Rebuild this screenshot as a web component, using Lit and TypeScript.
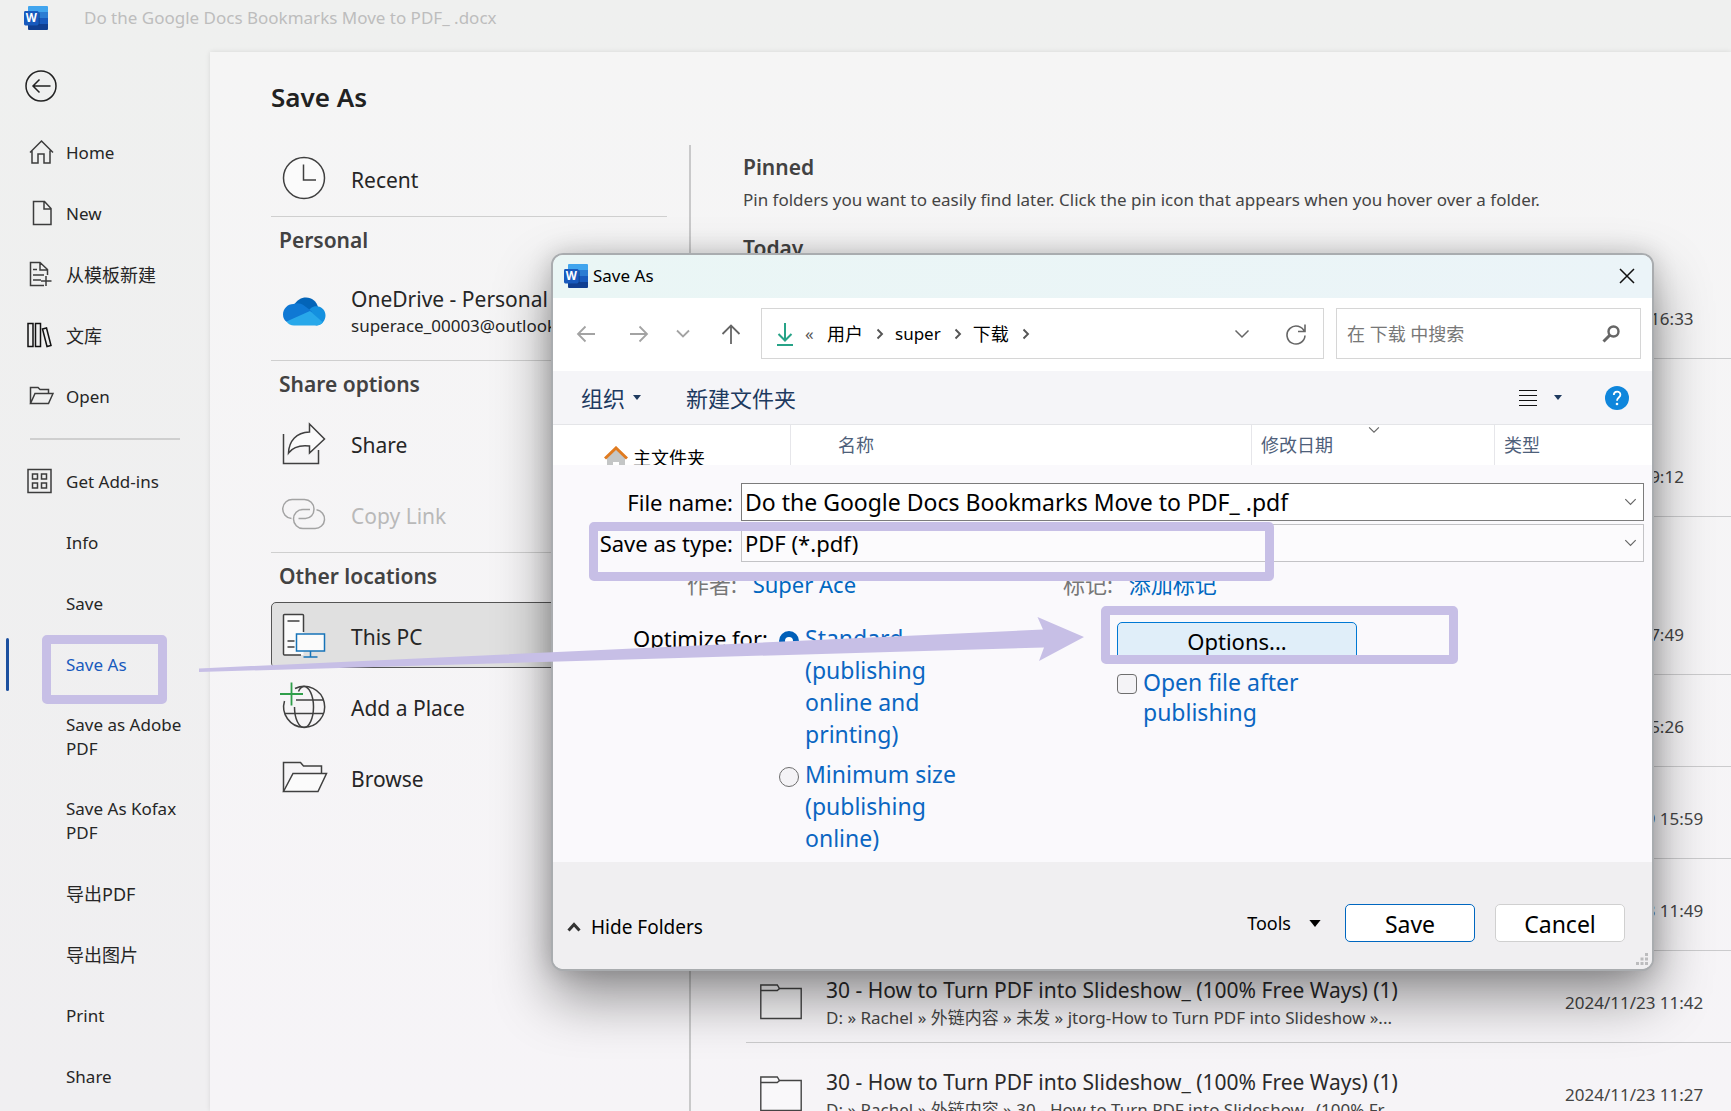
import { LitElement, html, css, type TemplateResult } from "lit";
import { customElement } from "lit/decorators.js";
import { classMap } from "lit/directives/class-map.js";

const wordLogo = html`<svg class="logo" viewBox="0 0 24 24" aria-hidden="true">
  <path d="M5 0h18a1 1 0 0 1 1 1v5H4V1a1 1 0 0 1 1-1z" fill="#41a5ee" />
  <path d="M4 6h20v6H4z" fill="#2b7cd3" />
  <path d="M4 12h20v6H4z" fill="#185abd" />
  <path d="M4 18h20v5a1 1 0 0 1-1 1H5a1 1 0 0 1-1-1z" fill="#103f91" />
  <path d="M4 6h10a2 2 0 0 1 2 2v10a2 2 0 0 1-2 2H4z" fill="#0b3a80" opacity=".5" />
  <rect x="0" y="5" width="14.500" height="14.500" rx="1.400" fill="#185abd" />
  <text x="7.200" y="16.400" text-anchor="middle" font-size="11.500" font-weight="700" fill="#fff">W</text>
</svg>`;

const chevron = (cls = "") => html`<svg class="chev ${cls}" viewBox="0 0 16 10" aria-hidden="true">
  <path d="M1.500 1.500 8 8l6.500-6.500" fill="none" stroke="currentColor" stroke-width="1.500" />
</svg>`;

const crumbSep = html`<svg class="sep" viewBox="0 0 8 12" aria-hidden="true">
  <path d="M1.500 1.500 6 6l-4.500 4.500" fill="none" stroke="#555" stroke-width="1.900" />
</svg>`;

const caret = html`<svg class="caret" viewBox="0 0 8 5" aria-hidden="true"><path d="M0 0h8L4 5z" fill="currentColor" /></svg>`;

const folder = html`<svg class="folder" viewBox="0 0 42 36" aria-hidden="true">
  <path d="M.800 34.500V1h16.500l2.200 3.500h21.700v30z" fill="rgba(255,255,255,.35)" stroke="#444" stroke-width="1.400" />
  <path d="M.800 6.500h16.500l2.200-2" fill="none" stroke="#444" stroke-width="1.400" />
</svg>`;

const navIcons: Record<string, TemplateResult> = {
  home: html`<svg class="nav-icon" viewBox="0 0 28 28"><path d="M6 11.500v12.500h6V15h6v9h6V11.500M4 13.500 15.500 2 27 13.500" /></svg>`,
  blank: html`<svg class="nav-icon" viewBox="0 0 28 28"><path d="M7.500 1.500h11l6.500 7v16H7.500zM18 1.500V9h7" /></svg>`,
  template: html`<svg class="nav-icon" viewBox="0 0 28 28"><path d="M18 24.500H4.500v-23H14l7.500 7V14M14 1.500V9h7.500M7 8.500h4M7 14h11M7 19h8M20 15v10M15 20h10.500" /></svg>`,
  library: html`<svg class="nav-icon strong" viewBox="0 0 28 28"><path d="M2 1.500h5v23H2zM9.500 1.500h5v23h-5zM16.500 7l4-1 4.500 17.500-4 1z" /></svg>`,
  open: html`<svg class="nav-icon" viewBox="0 0 28 28"><path d="M4.500 20.500V4.500h7.500l2 2h8.500v4M4.500 20.500l4.500-10h18l-4.500 10z" /></svg>`,
  addins: html`<svg class="nav-icon" viewBox="0 0 28 28"><path d="M2 1.500h23v23H2zM6.500 6h5v5h-5zM15.500 6h5v5h-5zM6.500 15h5v5h-5zM15.500 15h5v5h-5z" /></svg>`,
};

const placeIcons: Record<string, TemplateResult> = {
  clock: html`<svg class="place-icon" viewBox="0 0 44 46"><circle cx="22" cy="23" r="20.500" fill="#fbfbfb" /><path d="M21.500 9.500V25H34" /></svg>`,
  cloud: html`<svg class="place-icon" viewBox="0 0 44 46">
    <g stroke="none">
      <path d="M12 17C15 12 19 9.500 24 9.500c6 0 10.500 4 12 9.500l-12 7z" fill="#0364b8" />
      <path d="M36 18.500c4.500.500 7.500 4.500 7.500 9S40 37.500 34 37.500L22 27l7-7c2-1.500 4.500-2 7-1.500z" fill="#1490df" />
      <path d="M11.500 16c4-1.500 7.500-.500 10.500 1.500l8 6-25 10.500C2.500 32.500 1 30 1 26.500c0-5.500 4.500-10.500 10.500-10.500z" fill="#0f78d4" />
      <path d="M4.500 33.500 28 23l13 11.500c-1.500 2-4 3-7 3H12c-3 0-6-1.500-7.500-4z" fill="#28a8ea" />
    </g></svg>`,
  share: html`<svg class="place-icon" viewBox="0 0 44 46"><path d="M1.500 14v29.500h35V30" /><path fill="#fbfbfb" d="M27.500 4l15 15-15 14v-7C19 25 11 27 6.500 33 7 21 14 12.500 27.500 12z" /></svg>`,
  link: html`<svg class="place-icon" viewBox="0 0 44 46"><path d="M9.500 27.500A9.500 9.500 0 0 1 11 8.500h11.500A9.500 9.500 0 0 1 32 18c0 5.500-3.500 9.500-8.500 9.500h-7" /><path d="M34.500 18.800A9.400 9.400 0 0 1 33 37.500H21A9.500 9.500 0 0 1 11.500 28c0-5.500 4-9.500 9.500-9.500h7" /></svg>`,
  pc: html`<svg class="place-icon" viewBox="0 0 44 46">
    <path fill="#fbfbfb" stroke="none" d="M1.500 2.500h20V43h-20z" /><path d="M19 43H2.500a1 1 0 0 1-1-1V3.500a1 1 0 0 1 1-1h18a1 1 0 0 1 1 1V20M5.500 9h12M5.500 29h7M5.500 35h7" />
    <rect x="14.500" y="22" width="28" height="17" fill="#fbfbfb" stroke="#1673b8" /><path d="M28.500 39v6M21.500 45h14" stroke="#1673b8" /></svg>`,
  globe: html`<svg class="place-icon" viewBox="0 0 44 46">
    <path d="M13 5.500A20.500 20.500 0 1 1 2.500 18M13 5.500A20.500 20.500 0 0 1 22 3.500" /><path d="M16.500 8.500C18 5 20 3.500 22 3.500c5 0 9.500 9 9.500 20.500S27 44.500 22 44.500 12.500 36 12.500 24M14 17h27.500M3 30.500h38.500" />
    <path d="M9.500-.500v23M-2 11h23" stroke="#2f9e4a" stroke-width="1.800" /></svg>`,
  browse: html`<svg class="place-icon" viewBox="0 0 44 46"><path d="M1.500 37.500v-29h17l3 3.500h18v7.500" /><path fill="#fbfbfb" d="M1.500 37.500l9.500-18h33.500L36 37.500z" /></svg>`,
};

interface NavItem { label: string; icon?: string; current?: boolean }

const mainNav: NavItem[] = [
  { label: "Home", icon: "home" },
  { label: "New", icon: "blank" },
  { label: "从模板新建", icon: "template" },
  { label: "文库", icon: "library" },
  { label: "Open", icon: "open" },
];

const fileNav: NavItem[] = [
  { label: "Get Add-ins", icon: "addins" },
  { label: "Info" },
  { label: "Save" },
  { label: "Save As", current: true },
  { label: "Save as Adobe PDF" },
  { label: "Save As Kofax PDF" },
  { label: "导出PDF" },
  { label: "导出图片" },
  { label: "Print" },
  { label: "Share" },
];

interface Recent { date: string; name?: string; path?: string }

const title30 = "30 - How to Turn PDF into Slideshow_ (100% Free Ways) (1)";
const groups: Recent[][] = [
  [{ date: "2024/12/5 16:33" }],
  [{ date: "2024/12/4 9:12" }],
  [
    { date: "2024/12/2 7:49" },
    { date: "2024/12/2 5:26" },
    { date: "2024/11/29 15:59" },
    { date: "2024/11/23 11:49" },
    { date: "2024/11/23 11:42", name: title30, path: "D: » Rachel » 外链内容 » 未发 » jtorg-How to Turn PDF into Slideshow »..." },
    { date: "2024/11/23 11:27", name: title30, path: "D: » Rachel » 外链内容 » 30 - How to Turn PDF into Slideshow_ (100% Fr..." },
  ],
];

const base = css`
  * { box-sizing: border-box; }
  button, input, select { font: inherit; color: inherit; background: none; border: 0; padding: 0; margin: 0; text-align: left; }
  h1, h2, p { margin: 0; }
  svg { flex: none; display: block; }
  .logo { width: 24px; height: 24px; }
  .cjk { font-size: 18px; }
`;

@customElement("side-nav")
export class SideNav extends LitElement {
  static styles = [base, css`
    :host { display: block; padding-top: 18px; font-size: 17px; line-height: 24px; color: #262626; }
    .back { display: block; margin: 0 0 20px 25px; width: 32px; height: 32px; }
    .back svg { width: 32px; height: 32px; fill: none; stroke: #222; stroke-width: 1.500; }
    .item { position: relative; display: flex; align-items: center; gap: 12px; width: 100%; min-height: 61px; padding: 16px 16px 16px 26px; }
    .label { padding: 2px 0; }
    .slot { width: 28px; flex: none; }
    .nav-icon { width: 28px; height: 28px; fill: none; stroke: #3c3c3c; stroke-width: 1.500; }
    .strong { stroke: #111; }
    .current { color: #185abd; }
    .current::before { content: ""; position: absolute; left: 6px; top: 4px; bottom: 4px; width: 3px; border-radius: 2px; background: #1b4f9f; }
    .rule { height: 2px; margin: 11px 30px; background: #cfcfcf; }
  `];

  private item(n: NavItem) {
    const cjk = /[\u4e00-\u9fff]/.test(n.label);
    return html`<button class=${classMap({ item: true, current: !!n.current, cjk })}>
      <span class="slot">${n.icon ? navIcons[n.icon] : ""}</span><span class="label">${n.label}</span>
    </button>`;
  }

  render() {
    return html`
      <button class="back" aria-label="Back"><svg viewBox="0 0 32 32"><circle cx="16" cy="16" r="15" /><path d="M25.500 16H8M14.500 9.500 8 16l6.500 6.500" /></svg></button>
      <nav>
        ${mainNav.map((n) => this.item(n))}
        <div class="rule"></div>
        ${fileNav.map((n) => this.item(n))}
      </nav>`;
  }
}

@customElement("place-list")
export class PlaceList extends LitElement {
  static styles = [base, css`
    :host { display: block; width: 396px; color: #262626; }
    .place { display: flex; align-items: center; gap: 25px; width: 100%; height: 66px; margin-bottom: 5px; padding-left: 10px; border: 1px solid transparent; border-radius: 5px; font-size: 21px; line-height: 28px; white-space: nowrap; }
    .label { padding-top: 3px; }
    .place-icon { width: 44px; height: 46px; overflow: visible; fill: none; stroke: #404040; stroke-width: 1.500; }
    .account { height: 89px; }
    .mail { display: block; font-size: 17px; line-height: 26px; }
    .off { color: #b9b9b9; }
    .off .place-icon { stroke: #a3a3a3; }
    .selected { background: #e0e0e0; border-color: #555; }
    .group { border-top: 1px solid #cfcfcf; padding: 9px 0 12px 8px; font-size: 21px; line-height: 28px; font-weight: 600; color: #424242; height: 50px; }
  `];

  private place(icon: string, label: string, cls = "") {
    return html`<button class="place ${cls}" ?disabled=${cls === "off"}>${placeIcons[icon]}<span class="label">${label}</span></button>`;
  }

  render() {
    return html`
      ${this.place("clock", "Recent")}
      <h2 class="group">Personal</h2>
      <button class="place account">${placeIcons.cloud}<span class="label">OneDrive - Personal<span class="mail">superace_00003@outlook.com</span></span></button>
      <h2 class="group">Share options</h2>
      ${this.place("share", "Share")} ${this.place("link", "Copy Link", "off")}
      <h2 class="group">Other locations</h2>
      ${this.place("pc", "This PC", "selected")} ${this.place("globe", "Add a Place")} ${this.place("browse", "Browse")}
    `;
  }
}

@customElement("recent-folders")
export class RecentFolders extends LitElement {
  static styles = [base, css`
    :host { display: block; padding: 8px 0 0 52px; color: #444; font-size: 17px; line-height: 24px; }
    h2 { font-size: 21px; line-height: 28px; font-weight: 600; color: #424242; }
    .hint { margin: 7px 0 22px; white-space: nowrap; }
    .rows { list-style: none; margin: 5px 0 66px 3px; padding: 0; }
    .row { display: flex; align-items: center; height: 92px; padding: 10px 0 0 14px; border-bottom: 1px solid #cbcbcd; }
    .folder { width: 42px; height: 36px; margin-right: 24px; }
    .text { flex: 1; min-width: 0; padding-top: 5px; line-height: 27px; white-space: nowrap; }
    .name { font-size: 21px; color: #2a2a2a; }
    .date { width: 166px; flex: none; padding-top: 2px; }
  `];

  render() {
    return html`
      <h2>Pinned</h2>
      <p class="hint">Pin folders you want to easily find later. Click the pin icon that appears when you hover over a folder.</p>
      <h2>Today</h2>
      ${groups.map((g) => html`<ul class="rows">
        ${g.map((r) => html`<li class="row">
          ${r.name ? folder : ""}
          <div class="text">${r.name ? html`<div class="name">${r.name}</div><div>${r.path}</div>` : ""}</div>
          <time class="date">${r.date}</time>
        </li>`)}
      </ul>`)}`;
  }
}

@customElement("save-dialog")
export class SaveDialog extends LitElement {
  static styles = [base, css`
    :host { display: block; border: 2px solid #a9acaf; border-radius: 12px; overflow: hidden; background: #faf9fc; color: #000; font-size: 17px; line-height: 24px; box-shadow: 0 26px 56px rgba(0, 0, 0, .42), 0 0 24px rgba(0, 0, 0, .16); }
    .title { display: flex; align-items: center; gap: 5px; height: 43px; padding: 0 17px 2px 11px; background: linear-gradient(90deg, #eaf6f5, #ebf4f8); }
    .close { margin-left: auto; }
    .close svg { width: 16px; height: 16px; }
    .address { display: flex; gap: 12px; padding: 10px 11px 12px 23px; background: #fff; }
    .moves { display: flex; align-items: center; width: 173px; }
    .moves svg { width: 20px; height: 20px; fill: none; stroke: #a3a3a3; stroke-width: 1.800; }
    .moves button { flex: none; }
    .moves .back { width: 53px; }
    .moves .forward { width: 47px; }
    .moves .slim { width: 45px; }
    .moves .slim svg { width: 14px; }
    .moves .up svg { stroke: #666; height: 22px; }
    .moves .up { width: 20px; }
    .box { display: flex; align-items: center; height: 51px; border: 1px solid #d6d6d6; }
    .crumbs { flex: 1; padding: 0 17px 0 14px; }
    .down { width: 18px; height: 24px; margin-right: 11px; }
    .more-crumbs { width: 22px; color: #555; }
    .sep { width: 8px; height: 12px; margin: 0 11px 0 13px; }
    .chev { width: 16px; height: 10px; color: #666; }
    .history { margin-left: auto; }
    .refresh { margin-left: 36px; }
    .refresh svg { width: 20px; height: 22px; }
    .search { width: 305px; padding: 0 20px 0 10px; }
    .search input { flex: 1; min-width: 0; outline: 0; font-size: 18px; }
    .search input::placeholder { color: #777; opacity: 1; }
    .search svg { width: 18px; height: 18px; }
    .tools { display: flex; align-items: center; height: 54px; padding: 0 23px 0 28px; background: #f5f5f8; border-bottom: 1px solid #e4e5e8; color: #1e3a5f; font-size: 22px; }
    .organize { display: flex; align-items: center; gap: 8px; margin-right: 45px; }
    .caret { width: 8px; height: 5px; }
    .view { display: flex; align-items: center; gap: 16px; margin-left: auto; }
    .view .lines { width: 20px; height: 18px; }
    .help { margin-left: 43px; }
    .help svg { width: 24px; height: 24px; }
    .files { display: flex; height: 40px; overflow: hidden; background: #fff; font-size: 18px; }
    .tree { display: flex; align-items: flex-start; gap: 5px; width: 237px; padding: 21px 0 0 51px; }
    .tree svg { width: 24px; height: 24px; }
    .columns { flex: 1; border-collapse: collapse; table-layout: fixed; }
    .columns th { position: relative; padding: 0 0 0 9px; border-left: 1px solid #e6e6ea; font-weight: 400; color: #4e607a; text-align: left; }
    .columns .c-name { width: 461px; padding-left: 47px; }
    .columns .c-date { width: 243px; }
    .sorted { position: absolute; left: 116px; top: 1px; width: 12px; height: 8px; }
    .panel { padding: 18px 8px 8px 0; font-size: 23px; line-height: 32px; }
    .fields { display: grid; grid-template-columns: 180px 1fr; gap: 3px 8px; align-items: center; }
    .fields label { justify-self: end; white-space: nowrap; font-size: 22px; }
    .field { display: flex; align-items: center; height: 38px; padding-right: 6px; border: 1px solid #7c7c7c; background: #fff; }
    .type { border-color: #c3c3c6; background: #fcfbfd; font-size: 22px; }
    .field input, .field select { flex: 1; min-width: 0; height: 34px; padding-left: 3px; outline: 0; appearance: none; }
    .field .chev { width: 13px; height: 8px; }
    .meta { display: grid; grid-template-columns: 376px 1fr; height: 60px; padding-left: 134px; font-size: 22px; line-height: 44px; color: #777; }
    .meta button { margin-left: 10px; color: #0067c0; line-height: 44px; vertical-align: top; }
    .options { display: grid; grid-template-columns: 146px 338px 1fr; align-items: start; padding-left: 80px; }
    .optimize { font-size: 22px; }
    .choices { display: grid; gap: 8px; width: 200px; }
    .choice { display: flex; gap: 6px; color: #0a66c2; }
    .choice input { flex: none; width: 20px; height: 20px; margin-top: 9px; border: 1px solid #6e6e6e; background: #f4f3f6; appearance: none; }
    .choice input[type="radio"] { border-radius: 50%; }
    .choice input[type="radio"]:checked { border: 6px solid #005fb8; background: #fff; }
    .choice input[type="checkbox"] { border-radius: 4px; margin-top: 7px; }
    .choice span { width: 165px; }
    .publish { display: grid; gap: 7px; justify-items: start; line-height: 30px; }
    .btn { height: 38px; border: 1px solid #d0d0d0; border-radius: 5px; background: #fff; text-align: center; font-size: 23px; line-height: 32px; }
    .wide { width: 240px; border-color: #0078d4; background: #e0eef9; font-size: 22px; }
    .footer { display: flex; height: 107px; padding: 42px 27px 0 14px; background: #f0eff1; }
    .hide { display: flex; align-items: center; gap: 10px; height: 46px; font-size: 19px; }
    .hide svg { width: 14px; height: 10px; }
    .more { display: flex; align-items: center; gap: 18px; height: 38px; margin: 0 24px 0 auto; font-size: 18px; }
    .more .caret { width: 12px; height: 7px; }
    .footer .btn { width: 130px; padding-top: 1px; }
    .primary { border-color: #0067c0; margin-right: 20px; }
    .grip { position: absolute; right: 4px; bottom: 4px; width: 12px; height: 12px; }
  `];

  render() {
    return html`
      <header class="title">${wordLogo}<span>Save As</span>
        <button class="close" aria-label="Close"><svg viewBox="0 0 16 16"><path d="M1 1l14 14M15 1 1 15" stroke="#111" stroke-width="1.500" /></svg></button>
      </header>
      <div class="address">
        <div class="moves">
          <button class="back" aria-label="Back"><svg viewBox="0 0 20 20"><path d="M19 10H2M9.500 2.500 2 10l7.500 7.500" /></svg></button>
          <button class="forward" aria-label="Forward"><svg viewBox="0 0 20 20"><path d="M1 10h17M10.500 2.500 18 10l-7.500 7.500" /></svg></button>
          <button class="slim" aria-label="Recent locations"><svg viewBox="0 0 14 20"><path d="M1 6.500l6 6 6-6" /></svg></button>
          <button class="up" aria-label="Up"><svg viewBox="0 0 20 22"><path d="M10 21V2.500M1.500 11 10 2.500l8.500 8.500" /></svg></button>
        </div>
        <div class="box crumbs">
          <svg class="down" viewBox="0 0 18 24"><path d="M9 1v17M2.500 12 9 18.500l6.500-6.500M1 23h16" fill="none" stroke="#27a387" stroke-width="2" /></svg>
          <span class="more-crumbs">«</span>
          <span class="cjk">用户</span>${crumbSep}<span>super</span>${crumbSep}<span class="cjk">下载</span>${crumbSep}
          <button class="history" aria-label="Previous locations">${chevron()}</button>
          <button class="refresh" aria-label="Refresh"><svg viewBox="0 0 20 22"><path d="M18.500 9A9 9 0 1 0 19 12.500M19 1.500v7h-7" fill="none" stroke="#666" stroke-width="1.600" /></svg></button>
        </div>
        <div class="box search">
          <input type="text" aria-label="搜索" placeholder="在 下载 中搜索" />
          <svg viewBox="0 0 18 18"><circle cx="11.500" cy="6.500" r="5" fill="none" stroke="#666" stroke-width="2.400" /><path d="M8 10l-6.500 6.500" stroke="#666" stroke-width="3" /></svg>
        </div>
      </div>
      <div class="tools">
        <button class="organize">组织 ${caret}</button>
        <button>新建文件夹</button>
        <button class="view" aria-label="View"><svg class="lines" viewBox="0 0 20 18"><path d="M1 1.500h18M1 6.500h18M1 11.500h18M1 16.500h18" stroke="#111" stroke-width="1.200" /></svg>${caret}</button>
        <button class="help" aria-label="Help"><svg viewBox="0 0 24 24"><circle cx="12" cy="12" r="12" fill="#0f86dc" /><path d="M8.800 9c0-4.500 6.600-4.500 6.600-.300 0 2.800-3.400 2.800-3.400 6" fill="none" stroke="#fff" stroke-width="1.800" /><circle cx="12" cy="18" r="1.300" fill="#fff" /></svg></button>
      </div>
      <div class="files">
        <div class="tree">
          <svg viewBox="0 0 24 24"><path d="M3 11l9-8 9 8v13h-6v-8H9v8H3z" fill="#c4c6c6" /><path d="M1 12.500 12 2l11 10.500" fill="none" stroke="#e07b20" stroke-width="3" /></svg>
          <span>主文件夹</span>
        </div>
        <table class="columns"><thead><tr>
          <th class="c-name">名称</th><th class="c-date">修改日期${chevron("sorted")}</th><th>类型</th>
        </tr></thead></table>
      </div>
      <div class="panel">
        <div class="fields">
          <label for="name">File name:</label>
          <div class="field"><input id="name" type="text" value="Do the Google Docs Bookmarks Move to PDF_ .pdf" />${chevron()}</div>
          <label for="type">Save as type:</label>
          <div class="field type"><select id="type"><option>PDF (*.pdf)</option></select>${chevron()}</div>
        </div>
        <div class="meta">
          <div>作者: <button>Super Ace</button></div>
          <div>标记: <button>添加标记</button></div>
        </div>
        <div class="options">
          <span class="optimize" id="optimize">Optimize for:</span>
          <div class="choices" role="radiogroup" aria-labelledby="optimize">
            <label class="choice"><input type="radio" name="opt" checked /><span>Standard (publishing online and printing)</span></label>
            <label class="choice"><input type="radio" name="opt" /><span>Minimum size (publishing online)</span></label>
          </div>
          <div class="publish">
            <button class="btn wide">Options...</button>
            <label class="choice"><input type="checkbox" /><span>Open file after publishing</span></label>
          </div>
        </div>
      </div>
      <footer class="footer">
        <button class="hide"><svg viewBox="0 0 14 10"><path d="M1.500 8.500 7 2.500l5.500 6" fill="none" stroke="#333" stroke-width="3" /></svg>Hide Folders</button>
        <button class="more">Tools ${caret}</button>
        <button class="btn primary">Save</button>
        <button class="btn">Cancel</button>
        <svg class="grip" viewBox="0 0 12 12"><path d="M9 0h3v3H9zM9 4.500h3v3H9zM4.500 4.500h3v3h-3zM0 9h3v3H0zM4.500 9h3v3h-3zM9 9h3v3H9z" fill="#bcbcbe" /></svg>
      </footer>`;
  }
}

@customElement("app-root")
export class AppRoot extends LitElement {
  static styles = [base, css`
    :host { display: flex; flex-direction: column; position: relative; height: 100vh; overflow: hidden; background: linear-gradient(#eff0ef, #f0eff1); font-family: "Noto Sans", "Noto Sans CJK SC", sans-serif; }
    .bar { display: flex; align-items: center; gap: 36px; flex: none; height: 52px; padding: 0 24px 17px; font-size: 17px; line-height: 24px; color: #bdbdbd; }
    .body { display: flex; flex: 1; min-height: 0; }
    side-nav { width: 210px; flex: none; }
    .page { display: flex; flex-direction: column; flex: 1; min-width: 0; padding-left: 61px; background: linear-gradient(#f5f5f5, #f6f4f7); box-shadow: 0 0 5px rgba(0, 0, 0, .1); }
    h1 { padding: 27px 0 30px; font-size: 26px; line-height: 36px; font-weight: 600; color: #222; }
    .cols { display: flex; flex: 1; min-height: 0; }
    place-list { flex: none; margin-right: 22px; }
    recent-folders { flex: 1; min-width: 0; border-left: 2px solid #c9c9ca; }
    save-dialog { position: absolute; left: 551px; top: 253px; width: 1103px; }
    .mark { position: absolute; border: 9px solid #c7bfe6; border-radius: 5px; pointer-events: none; }
    .mark-nav { left: 42px; top: 635px; width: 125px; height: 69px; }
    .mark-type { left: 589px; top: 522px; width: 685px; height: 59px; }
    .mark-options { left: 1101px; top: 606px; width: 357px; height: 58px; }
    .arrow { position: absolute; left: 199px; top: 617px; width: 885px; height: 55px; pointer-events: none; }
  `];

  render() {
    return html`
      <header class="bar">${wordLogo}<span>Do the Google Docs Bookmarks Move to PDF_ .docx</span></header>
      <div class="body">
        <side-nav></side-nav>
        <main class="page">
          <h1>Save As</h1>
          <div class="cols"><place-list></place-list><recent-folders></recent-folders></div>
        </main>
      </div>
      <save-dialog role="dialog" aria-label="Save As"></save-dialog>
      <div class="mark mark-nav"></div>
      <div class="mark mark-type"></div>
      <div class="mark mark-options"></div>
      <svg class="arrow" viewBox="0 0 885 55" aria-hidden="true"><path d="M0 51.500 844 12.500 838.500 0 885 20 840 44 845 30.500 0 55z" fill="#c7bfe6" /></svg>
    `;
  }
}
